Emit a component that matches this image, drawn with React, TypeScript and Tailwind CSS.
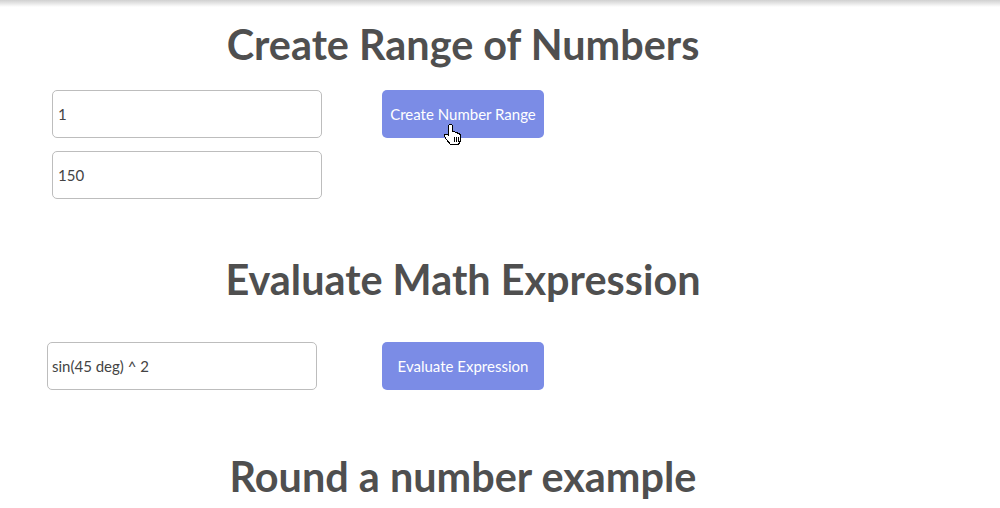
import React from "react";

function HandCursor() {
  return (
    <svg
      className="absolute left-[444px] top-[124px]"
      width="17"
      height="21"
      viewBox="0 0 17 21"
      shapeRendering="crispEdges"
    >
      <path
        d="M5.5 0.5 H7.5 L8.5 1.5 V7.5 H10.5 L11.5 8.5 H13 L14 9.5 H15 L16.5 11 V16.5 L14.5 20.5 H6.5 L2.5 15.5 L0.5 12.5 V11 L1.5 10 H3 L4.5 11.5 V1.5 Z"
        fill="#fff"
        stroke="#000"
        strokeWidth="1"
      />
      <path d="M10.5 13 V18 M12.5 13 V18 M14.5 13 V18" stroke="#000" strokeWidth="1" />
    </svg>
  );
}

export default function App() {
  const font = { fontFamily: "Lato, 'Liberation Sans', sans-serif" };
  return (
    <div className="relative w-[1000px] h-[508px] bg-white overflow-hidden" style={font}>
      <div className="absolute inset-x-0 top-0 h-[7px] bg-gradient-to-b from-[#d0d0d0] to-white" />
      <div className="flex flex-col w-[926px] pt-[20px]">
        <h1 className="text-[41.4px] leading-[48px] font-bold text-[#4f4f4f] text-center">
          Create Range of Numbers
        </h1>
        <div className="flex mt-[22px]">
          <div className="flex flex-col ml-[52px] w-[270px] gap-[13px]">
            <input
              defaultValue="1"
              className="h-12 w-[270px] rounded-[5px] border border-[#bdbdbd] px-[5px] text-[15px] text-[#444] outline-none"
            />
            <input
              defaultValue="150"
              className="h-12 w-[270px] rounded-[5px] border border-[#bdbdbd] px-[5px] text-[15px] text-[#444] outline-none"
            />
          </div>
          <button className="ml-[60px] h-12 w-[162px] rounded-[5px] bg-[#7b8ce6] text-[15px] text-white">
            Create Number Range
          </button>
        </div>
        <h1 className="mt-[56px] text-[41.4px] leading-[48px] font-bold text-[#4f4f4f] text-center">
          Evaluate Math Expression
        </h1>
        <div className="flex mt-[39px]">
          <input
            defaultValue="sin(45 deg) ^ 2"
            className="ml-[47px] h-12 w-[270px] rounded-[5px] border border-[#bdbdbd] px-[4px] text-[15px] text-[#444] outline-none"
          />
          <button className="ml-[65px] h-12 w-[162px] rounded-[5px] bg-[#7b8ce6] text-[15px] text-white">
            Evaluate Expression
          </button>
        </div>
        <h1 className="mt-[62px] text-[41.4px] leading-[48px] font-bold text-[#4f4f4f] text-center">
          Round a number example
        </h1>
      </div>
      <HandCursor />
    </div>
  );
}
